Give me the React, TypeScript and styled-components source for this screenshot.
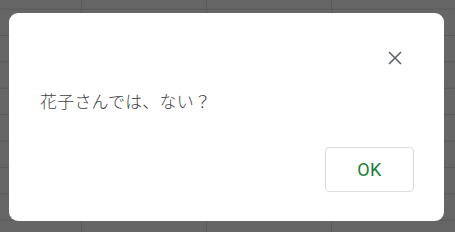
import React from "react";
import styled, { createGlobalStyle } from "styled-components";

const Global = createGlobalStyle`
  html, body { margin: 0; padding: 0; }
  body {
    width: 455px;
    height: 232px;
    overflow: hidden;
    font-family: Roboto, "Noto Sans CJK JP", sans-serif;
  }
`;

const Backdrop = styled.div`
  box-sizing: border-box;
  width: 455px;
  height: 232px;
  padding: 13px 11px 11px 9px;
  background-color: #666666;
  background-image:
    linear-gradient(to right, #595959 1px, transparent 1px),
    linear-gradient(to bottom, #595959 1px, transparent 1px);
  background-size: 125px 100%, 100% 26.4px;
  background-position: 81px 0, 0 8.6px;
  display: flex;
`;

const Dialog = styled.div`
  box-sizing: border-box;
  flex: 1;
  background: #ffffff;
  border-radius: 9px;
  padding: 26px 30px 29px 31px;
  display: flex;
  flex-direction: column;
`;

const Header = styled.div`
  display: flex;
  justify-content: flex-end;
`;

const CloseButton = styled.button`
  width: 38px;
  height: 38px;
  padding: 0;
  border: none;
  background: transparent;
  display: flex;
  align-items: center;
  justify-content: center;
  cursor: pointer;
`;

const Message = styled.p`
  margin: 12px 0 0 0;
  font-family: "Noto Sans CJK JP", sans-serif;
  font-size: 17px;
  font-weight: 300;
  letter-spacing: 0.2px;
  line-height: 24px;
  color: #3c4043;
`;

const Footer = styled.div`
  margin-top: auto;
  display: flex;
  justify-content: flex-end;
`;

const OkButton = styled.button`
  box-sizing: border-box;
  width: 89px;
  height: 45px;
  border: 1px solid #dadce0;
  border-radius: 4px;
  background: #ffffff;
  color: #188038;
  font-family: Roboto, sans-serif;
  font-size: 18px;
  font-weight: 400;
  letter-spacing: 0.3px;
  cursor: pointer;
`;

export default function App() {
  return (
    <>
      <Global />
      <Backdrop>
        <Dialog>
          <Header>
            <CloseButton aria-label="閉じる">
              <svg width="14" height="14" viewBox="0 0 14 14">
                <path d="M1 1L13 13M13 1L1 13" stroke="#5f6368" strokeWidth="1.6" fill="none" />
              </svg>
            </CloseButton>
          </Header>
          <Message>花子さんでは、ない？</Message>
          <Footer>
            <OkButton>OK</OkButton>
          </Footer>
        </Dialog>
      </Backdrop>
    </>
  );
}
